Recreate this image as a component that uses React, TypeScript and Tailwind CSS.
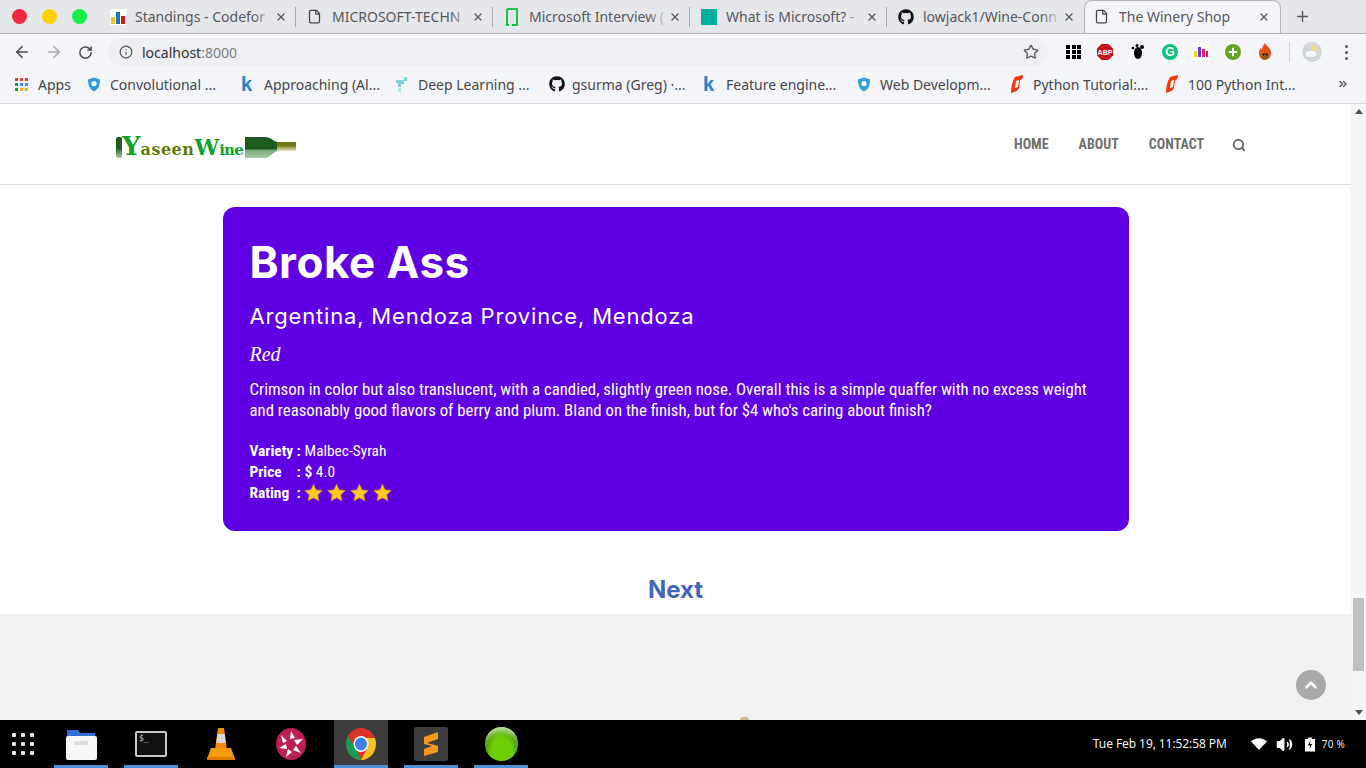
import React from 'react';
import { ArrowLeft, ArrowRight, RotateCw, Info, Star, Plus, X, File, ChevronsRight, Search, ChevronUp, Volume2 } from 'lucide-react';
import { FaGithub } from 'react-icons/fa';

const chromeFont = "font-['Noto_Sans',sans-serif] [font-stretch:condensed]";

const GithubIcon: React.FC<{ size: number }> = ({ size }) => <FaGithub size={size} color="#111" />;

const BarsIcon = () => (
    <svg width="16" height="16" viewBox="0 0 16 16">
        <rect width="16" height="16" fill="#fff" />
        <rect x="1" y="8" width="4" height="7" fill="#f6c026" />
        <rect x="6" y="3" width="4" height="12" fill="#1a73c9" />
        <rect x="11" y="7" width="4" height="8" fill="#c5221f" />
    </svg>
);

const GreenDocIcon = () => (
    <svg width="16" height="18" viewBox="0 0 16 18" fill="none" stroke="#12c24a" strokeWidth="2">
        <path d="M3 1h10v16H8M3 1v16h2" />
    </svg>
);

const ShieldIcon = () => (
    <svg width="14" height="15" viewBox="0 0 14 15">
        <path d="M7 0.5 13 2.5c0 6-1.5 9.500-6 12-4.500-2.500-6-6-6-12z" fill="#2f9ed8" />
        <circle cx="7" cy="6.500" r="2.600" fill="#fff" />
    </svg>
);

const KaggleIcon = () => (
    <span className="w-3 text-[20px] leading-none font-bold text-[#1f86c7] font-['Liberation_Sans',sans-serif]">k</span>
);

const TrailheadIcon = () => (
    <svg width="13" height="17" viewBox="0 0 13 17">
        <path d="M1 4h8V1h3v4H9v3H6v3H3V7H1z" fill="#7fd0d0" />
        <path d="M3 12h3v4H3z" fill="#b7e4e4" />
    </svg>
);

const FlameTabIcon = () => (
    <svg width="14" height="18" viewBox="0 0 14 18">
        <path d="M5 2 13 0c0 3-1 5-3 5l-1 8c-1 3-5 4-8 5 0-6 1-11 4-16z" fill="#f0360e" />
        <path d="M6 6 9 5 8 12 5 13z" fill="#fff" />
    </svg>
);

interface TabProps {
    title: string;
    icon: React.ReactNode;
    active?: boolean;
    separator?: boolean;
}

const Tab: React.FC<TabProps> = ({ title, icon, active, separator }) => (
    <div className={`relative flex h-[33px] w-[197px] shrink-0 items-center ${active ? 'rounded-t-[8px] border border-b-0 border-[#b4b5b9] bg-[#f4f5f8] pb-[1px] pl-[9px] pr-[10px]' : 'pl-[11px] pr-[9px]'}`}>
        <span className="flex w-[25px] shrink-0 items-center">{icon}</span>
        <span className={`relative w-[140px] overflow-hidden whitespace-nowrap text-[14px] text-[#55565c] ${chromeFont}`}>
            {title}
            {!active && <span className="absolute inset-y-0 right-0 w-[22px] bg-linear-to-r from-transparent to-[#e6e7eb]"></span>}
        </span>
        <X size={12} strokeWidth={2.5} color="#55565c" className="ml-auto" />
        {separator && <span className="absolute right-0 top-[7px] h-[20px] w-px bg-[#a8a9ad]"></span>}
    </div>
);

interface BookmarkProps {
    label: string;
    icon: React.ReactNode;
    width: string;
}

const Bookmark: React.FC<BookmarkProps> = ({ label, icon, width }) => (
    <div className={`flex shrink-0 items-center ${width}`}>
        <span className="flex w-[23px] shrink-0 items-center justify-start">{icon}</span>
        <span className={`whitespace-nowrap text-[14px] text-[#45464b] ${chromeFont}`}>{label}</span>
    </div>
);

const AppsIcon = () => (
    <div className="grid w-[13px] grid-cols-3 gap-[2px]">
        {['#db4437', '#db4437', '#db4437', '#0f9d58', '#4285f4', '#4285f4', '#0f9d58', '#f4b400', '#f4b400'].map((c, i) => (
            <span key={i} className="h-[3px] w-[3px]" style={{ backgroundColor: c }}></span>
        ))}
    </div>
);

const ExtensionIcons = () => (
    <div className="flex items-center">
        <div className="ml-[18px] grid w-[16px] grid-cols-3 gap-px">
            {Array.from({ length: 9 }).map((_, i) => <span key={i} className="h-[4px] w-[4px] bg-black"></span>)}
        </div>
        <svg width="18" height="18" viewBox="0 0 18 18" className="ml-[14px]">
            <path d="M5.500 1h7L17 5.500v7L12.500 17h-7L1 12.500v-7z" fill="#c5141c" />
            <text x="9" y="11.500" fontSize="7" fontWeight="700" fill="#fff" textAnchor="middle" fontFamily="Liberation Sans">ABP</text>
        </svg>
        <svg width="16" height="18" viewBox="0 0 16 18" className="ml-[16px]">
            <ellipse cx="8" cy="10" rx="4" ry="6" fill="#000" />
            <circle cx="12" cy="4" r="2" fill="#000" />
            <circle cx="7" cy="2.500" r="1.500" fill="#000" />
            <circle cx="3" cy="5" r="1.300" fill="#000" />
        </svg>
        <span className="ml-[16px] flex h-[16px] w-[16px] items-center justify-center rounded-full bg-[#12c281] text-[12px] font-bold leading-none text-white font-['Liberation_Sans',sans-serif]">G</span>
        <svg width="16" height="16" viewBox="0 0 16 16" className="ml-[15px]">
            <rect width="16" height="16" fill="#fff" />
            <rect x="1" y="7" width="3" height="6" fill="#f2d21b" />
            <rect x="5" y="3" width="3" height="10" fill="#7a32e0" />
            <rect x="9" y="5" width="3" height="8" fill="#e0218a" />
            <rect x="13" y="7" width="2" height="6" fill="#e02020" />
        </svg>
        <span className="ml-[16px] flex h-[16px] w-[16px] items-center justify-center rounded-full bg-[#5fa31e]">
            <Plus size={12} strokeWidth={4} color="#fff" />
        </span>
        <svg width="16" height="18" viewBox="0 0 16 18" className="ml-[16px]">
            <path d="M8 0c1 3 5 4 6 9 .5 5-3 8-6 8s-6.500-3-6-8c.3-2 1-3 2-4 .2 1 .6 2 1.200 2C5 5 6 2 8 0z" fill="#ee4a16" />
            <ellipse cx="8" cy="13" rx="3.800" ry="3.400" fill="#8a5a16" />
            <circle cx="6.500" cy="11.500" r=".9" fill="#000" />
            <circle cx="9.500" cy="11.500" r=".9" fill="#000" />
        </svg>
        <span className="ml-[16px] h-[20px] w-px bg-[#cfd0d4]"></span>
        <span className="ml-[12px] flex h-[20px] w-[20px] items-center justify-center rounded-full bg-[#d5d6d8]">
            <svg width="16" height="14" viewBox="0 0 16 14">
                <circle cx="10.500" cy="4.500" r="3.500" fill="#f3dc7b" />
                <ellipse cx="7" cy="9" rx="6" ry="3.800" fill="#f4f8fb" stroke="#a9c3dc" strokeWidth=".6" />
            </svg>
        </span>
        <div className="ml-[23px] flex flex-col gap-[3px]">
            <span className="h-[3px] w-[3px] rounded-full bg-[#55565c]"></span>
            <span className="h-[3px] w-[3px] rounded-full bg-[#55565c]"></span>
            <span className="h-[3px] w-[3px] rounded-full bg-[#55565c]"></span>
        </div>
    </div>
);

const BrowserChrome = () => (
    <div className="shrink-0">
        {/* Tab strip */}
        <div className="flex h-[34px] items-end border-b border-[#adaeb2] bg-[#e6e7eb]">
            <div className="flex h-[33px] w-[99px] shrink-0 items-center gap-[15px] pl-[12px]">
                <span className="h-[15px] w-[15px] rounded-full bg-[#f0293e]"></span>
                <span className="h-[15px] w-[15px] rounded-full bg-[#fad400]"></span>
                <span className="h-[15px] w-[15px] rounded-full bg-[#16ee4c]"></span>
            </div>
            <Tab title="Standings - Codefor" icon={<BarsIcon />} separator />
            <Tab title="MICROSOFT-TECHN" icon={<File size={15} color="#44454a" />} separator />
            <Tab title="Microsoft Interview (" icon={<GreenDocIcon />} separator />
            <Tab title="What is Microsoft? -" icon={<span className="h-[16px] w-[16px] bg-[#00b09b]"></span>} separator />
            <Tab title="lowjack1/Wine-Conn" icon={<GithubIcon size={16} />} />
            <Tab title="The Winery Shop" icon={<File size={15} color="#44454a" />} active />
            <Plus size={17} strokeWidth={2} color="#55565c" className="mb-[8px] ml-[13px]" />
        </div>
        {/* Address bar */}
        <div className="flex h-[36px] items-center bg-[#f4f5f8] pl-[13px]">
            <ArrowLeft size={18} strokeWidth={2.2} color="#4a4b50" />
            <ArrowRight size={18} strokeWidth={2.2} color="#a5a6aa" className="ml-[14px]" />
            <RotateCw size={15} strokeWidth={2.4} color="#4a4b50" className="ml-[15px]" />
            <div className="ml-[15px] flex h-[28px] w-[940px] items-center rounded-full bg-[#eeeff2] pl-[11px] pr-[9px]">
                <Info size={14} strokeWidth={2} color="#4a4b50" />
                <span className={`ml-[9px] text-[14px] text-[#2e2f33] ${chromeFont}`}>localhost<span className="text-[#7d7e83]">:8000</span></span>
                <Star size={16} strokeWidth={2} color="#55565c" className="ml-auto" />
            </div>
            <ExtensionIcons />
        </div>
        {/* Bookmarks */}
        <div className="flex h-[34px] items-center border-b border-[#d5d5db] bg-[#f4f5f8] pb-[5px] pl-[15px]">
            <Bookmark label="Apps" icon={<AppsIcon />} width="w-[72px]" />
            <Bookmark label="Convolutional ..." icon={<ShieldIcon />} width="w-[154px]" />
            <Bookmark label="Approaching (Al..." icon={<KaggleIcon />} width="w-[154px]" />
            <Bookmark label="Deep Learning ..." icon={<TrailheadIcon />} width="w-[154px]" />
            <Bookmark label="gsurma (Greg) ·..." icon={<GithubIcon size={16} />} width="w-[154px]" />
            <Bookmark label="Feature engine..." icon={<KaggleIcon />} width="w-[154px]" />
            <Bookmark label="Web Developm..." icon={<ShieldIcon />} width="w-[153px]" />
            <Bookmark label="Python Tutorial:..." icon={<FlameTabIcon />} width="w-[155px]" />
            <Bookmark label="100 Python Int..." icon={<FlameTabIcon />} width="w-[172px]" />
            <ChevronsRight size={12} strokeWidth={2.5} color="#45464b" />
        </div>
    </div>
);

const Logo = () => (
    <div className="mt-[7px] flex h-[28px] items-center">
        <span className="h-[21px] w-[6px] rounded-[2px] bg-linear-to-b from-[#1c5a1f] via-[#1c5a1f] to-[#a8c9a8]"></span>
        <span className="w-[123px] whitespace-nowrap pb-[4px] text-[26px] font-bold leading-none font-['DejaVu_Serif',serif]">
            <span className="text-[#12a02a]">Y</span>
            <span className="text-[16px] tracking-[0.5px] text-[#5e7a00]">aseen</span>
            <span className="text-[22px] text-[#12a02a]">W</span>
            <span className="text-[15px] tracking-[-0.8px] text-[#12a02a]">ine</span>
        </span>
        <svg width="51" height="21" viewBox="0 0 51 21" className="shrink-0">
            <defs>
                <linearGradient id="bottle" x1="0" y1="0" x2="0" y2="1">
                    <stop offset="0.55" stopColor="#1c5a1f" />
                    <stop offset="0.65" stopColor="#7fae7f" />
                    <stop offset="1" stopColor="#a9c9a9" />
                </linearGradient>
                <linearGradient id="neck" x1="0" y1="0" x2="0" y2="1">
                    <stop offset="0.4" stopColor="#6f7a10" />
                    <stop offset="1" stopColor="#e9e6c6" />
                </linearGradient>
            </defs>
            <path d="M0 0h20c6 0 9 5 13 5v9c-4 0-8 7-13 7H0z" fill="url(#bottle)" />
            <rect x="32" y="5" width="19" height="9" fill="url(#neck)" />
        </svg>
    </div>
);

const Navbar = () => (
    <div className="flex h-[81px] shrink-0 items-center border-b border-[#dcdcdc] bg-white pl-[116px] pr-[105px]">
        <Logo />
        <nav className="ml-auto flex items-center gap-[30px] pt-[1px] text-[14px] font-bold uppercase text-[#6f6f6f] [font-stretch:75%] font-['Roboto',sans-serif]">
            <span>Home</span>
            <span>About</span>
            <span>Contact</span>
            <Search size={14} strokeWidth={3.5} className="-ml-[2px]" />
        </nav>
    </div>
);

const RatingStar = () => (
    <svg width="19" height="19" viewBox="0 0 24 24">
        <path d="M12 1.500 15.300 8.700 23 9.600 17.300 14.900 18.800 22.500 12 18.700 5.200 22.500 6.700 14.900 1 9.600 8.700 8.700z" fill="#fccb1e" stroke="#d99a12" strokeWidth=".8" />
    </svg>
);

const WineCard = () => (
    <div className="mx-auto mt-[22px] h-[324px] w-[906px] rounded-[12px] bg-[#5f00e3] px-[27px] pt-[27px] text-white">
        <h1 className="text-[44px] font-bold leading-[56px] tracking-[0.5px] font-['Inter',sans-serif]">Broke Ass</h1>
        <h2 className="mt-[8px] text-[22px] font-normal leading-[36px] tracking-[0.82px] font-['Inter',sans-serif]">Argentina, Mendoza Province, Mendoza</h2>
        <p className="mt-[6px] text-[20px] italic leading-[28px] font-['Liberation_Serif',serif]">Red</p>
        <p className="mt-[11px] text-[16.8px] leading-[21px] [font-stretch:75%] font-['Roboto',sans-serif]">
            Crimson in color but also translucent, with a candied, slightly green nose. Overall this is a simple quaffer with no excess weight and reasonably good flavors of berry and plum. Bland on the finish, but for $4 who's caring about finish?
        </p>
        <div className="mt-[20px] text-[15.4px] leading-[21px] [font-stretch:75%] font-['Roboto',sans-serif]">
            <div className="flex">
                <span className="w-[47px] font-bold">Variety</span>
                <span className="w-[8px] font-bold">:</span>
                <span>Malbec-Syrah</span>
            </div>
            <div className="flex">
                <span className="w-[47px] font-bold">Price</span>
                <span className="w-[8px] font-bold">:</span>
                <span><span className="font-bold">$</span> 4.0</span>
            </div>
            <div className="flex items-center">
                <span className="w-[47px] font-bold">Rating</span>
                <span className="w-[8px] font-bold">:</span>
                <span className="-ml-[1px] -mt-[2px] flex gap-[4px]">
                    {[0, 1, 2, 3].map(i => <RatingStar key={i} />)}
                </span>
            </div>
        </div>
    </div>
);

const Page = () => (
    <div className="relative flex min-w-0 flex-1 flex-col overflow-hidden">
        <Navbar />
        <div className="h-[429px] shrink-0 bg-white">
            <WineCard />
            <p className="mt-[45px] text-center text-[24px] font-bold leading-[28px] text-[#4466b6] font-['Inter',sans-serif]">Next</p>
        </div>
        <div className="flex flex-1 justify-center bg-[#f1f1f1]"></div>
        <button className="absolute bottom-[20px] right-[25px] flex h-[30px] w-[30px] items-center justify-center rounded-full bg-[#a9a9a9]">
            <ChevronUp size={18} strokeWidth={3.5} color="#fff" />
        </button>
        <span className="absolute bottom-0 left-[740px] h-[3px] w-[9px] rounded-t-full bg-[#cdb98f]"></span>
    </div>
);

const Scrollbar = () => (
    <div className="flex w-[15px] shrink-0 flex-col items-center bg-[#f5f5f5]">
        <span className="mt-[5px] h-0 w-0 border-x-[4px] border-b-[5px] border-x-transparent border-b-[#505050]"></span>
        <div className="mt-[484px] h-[73px] w-[11px] bg-[#c1c1c1]"></div>
        <span className="mt-auto mb-[5px] h-0 w-0 border-x-[4px] border-t-[5px] border-x-transparent border-t-[#505050]"></span>
    </div>
);

const Dock: React.FC<{ children: React.ReactNode; active?: boolean; running?: boolean; className?: string }> = ({ children, active, running, className }) => (
    <div className={`relative flex h-[48px] w-[54px] shrink-0 items-center justify-center ${active ? 'bg-[#3c3c3c]' : ''} ${className ?? ''}`}>
        {children}
        {running && <span className="absolute inset-x-0 bottom-0 h-[3px] bg-[#4a90d9]"></span>}
    </div>
);

const Taskbar = () => (
    <div className="flex h-[48px] shrink-0 items-center bg-black pr-[21px]">
        <div className="ml-[12px] grid w-[22px] grid-cols-3 gap-[5px]">
            {Array.from({ length: 9 }).map((_, i) => <span key={i} className="h-[4px] w-[4px] rounded-[1px] bg-[#e8e8e8]"></span>)}
        </div>
        <Dock running className="ml-[20px]">
            <svg width="32" height="32" viewBox="0 0 32 32">
                <path d="M2 2h11l2 3h15v8H2z" fill="#2f6fdc" />
                <rect x="1" y="8" width="31" height="24" rx="2" fill="#f7f7f7" />
                <rect x="9" y="13" width="14" height="4" rx="1.500" fill="#dcdcdc" />
            </svg>
        </Dock>
        <Dock running className="ml-[16px]">
            <div className="flex h-[26px] w-[32px] flex-col rounded-[2px] border-2 border-[#c8c8c8] bg-[#111] pl-[2px] pt-[1px] text-[8px] leading-[10px] text-[#c8c8c8] font-['DejaVu_Sans_Mono',monospace]">$_</div>
        </Dock>
        <Dock className="ml-[16px]">
            <svg width="30" height="34" viewBox="0 0 30 34">
                <path d="M12 1h6l3 22H9z" fill="#f08a0a" />
                <path d="M11.300 7h7.400l1 9H10.300z" fill="#d8d8d8" />
                <path d="M5 21h20l4 11H1z" fill="#f59a0a" />
                <path d="M1 30h28v3H1z" fill="#e07a00" />
            </svg>
        </Dock>
        <Dock className="ml-[16px]">
            <svg width="30" height="32" viewBox="0 0 30 32">
                <ellipse cx="15" cy="16" rx="15" ry="16" fill="#bb1f55" />
                <path d="M15 3 19 10 14 11zM27 11l-6 6-3-5zM25 25l-8-3 3-4zM10 29l2-8 4 3zM3 20l7-4 1 5zM5 7l6 6-4 2z" fill="#fff" />
                <path d="m12 12 7 4-7 4z" fill="#bb1f55" />
            </svg>
        </Dock>
        <Dock active running className="ml-[16px]">
            <svg width="30" height="32" viewBox="0 0 30 32">
                <ellipse cx="15" cy="16" rx="15" ry="16" fill="#dd3327" />
                <path d="M15 32C7 32 0 25 0 16c0-3 .8-6 2-8l9 15z" fill="#129d52" />
                <path d="M15 32c8 0 15-7 15-16 0-2-.5-4-1-6H15l6 11z" fill="#f6c324" />
                <ellipse cx="15" cy="16" rx="7.500" ry="8" fill="#fff" />
                <ellipse cx="15" cy="16" rx="6" ry="6.500" fill="#3f7fe8" />
            </svg>
        </Dock>
        <Dock running className="ml-[16px]">
            <div className="flex h-[34px] w-[34px] items-center justify-center rounded-[2px] bg-[#3d3d3d]">
                <svg width="18" height="24" viewBox="0 0 16 24">
                    <path d="M15 0v7L1 12V5zM1 10l14 4v6L1 24v-7l8-3-8-2z" fill="#f59a1c" />
                </svg>
            </div>
        </Dock>
        <Dock running className="ml-[16px]">
            <span className="h-[34px] w-[33px] rounded-full bg-[radial-gradient(ellipse_at_50%_85%,#6fd008_45%,#3f8a05_80%)] shadow-[inset_0_7px_5px_-3px_#c6e0a8]"></span>
        </Dock>
        <span className="ml-auto text-[12px] tracking-[-0.08px] text-[#f0f0f0] font-['Noto_Sans',sans-serif]">Tue Feb 19, 11:52:58 PM</span>
        <svg width="16" height="12" viewBox="0 0 16 12" className="ml-[24px]">
            <path d="M0 3.500C4.500-1 11.500-1 16 3.500L8 12z" fill="#fff" />
        </svg>
        <Volume2 size={17} fill="#fff" color="#fff" className="ml-[9px]" />
        <svg width="10" height="15" viewBox="0 0 10 14" className="ml-[12px]">
            <path d="M3 0h4v1.500h3V14H0V1.500h3z" fill="#fff" />
            <path d="M5.500 3 2.800 8H5l-.5 3.500L7.200 6.500H5z" fill="#000" />
        </svg>
        <span className="ml-[7px] text-[10px] tracking-[0.2px] text-[#e8e8e8] font-['Noto_Sans',sans-serif]">70 %</span>
    </div>
);

const App: React.FC = () => {
    return (
        <div className="flex h-[768px] w-[1366px] flex-col overflow-hidden">
            <BrowserChrome />
            <div className="flex min-h-0 flex-1">
                <Page />
                <Scrollbar />
            </div>
            <Taskbar />
        </div>
    );
};

export default App;
